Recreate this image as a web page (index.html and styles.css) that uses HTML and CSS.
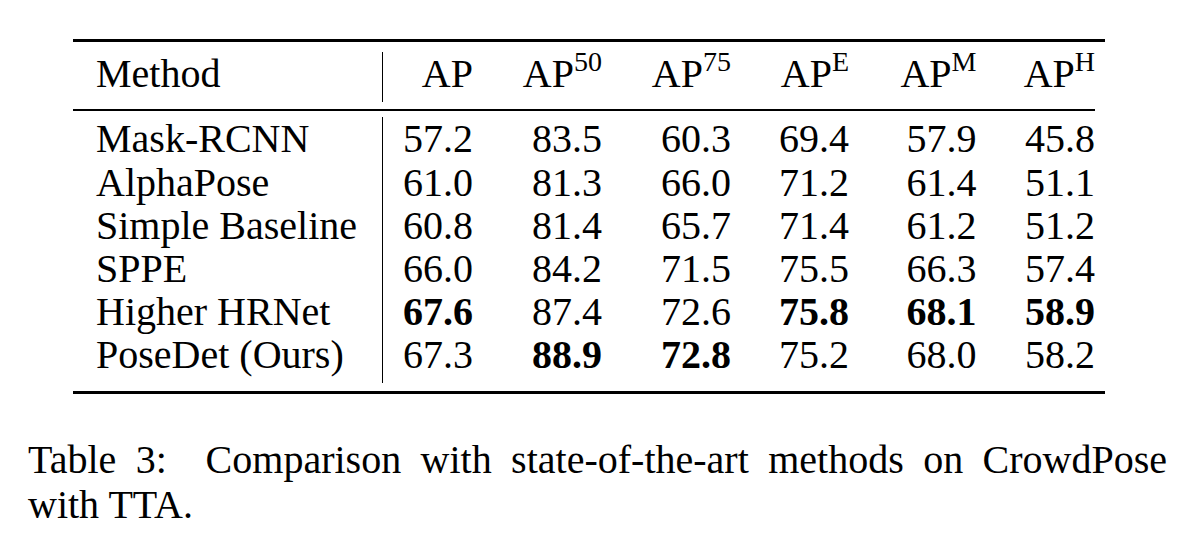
FILE: index.html
```html
<!DOCTYPE html>
<html lang="en">
<head>
<meta charset="utf-8">
<title>Table 3</title>
<link rel="stylesheet" href="styles.css">
</head>
<body>
<main class="page">
  <div class="results">
    <div class="section head">
      <div class="row last">
        <div class="cell method">Method</div>
        <div class="cell num">AP</div>
        <div class="cell num">AP<sup>50</sup></div>
        <div class="cell num">AP<sup>75</sup></div>
        <div class="cell num">AP<sup>E</sup></div>
        <div class="cell num">AP<sup>M</sup></div>
        <div class="cell num">AP<sup>H</sup></div>
      </div>
    </div>
    <div class="section body">
      <div class="row">
        <div class="cell method">Mask-RCNN</div>
        <div class="cell num">57.2</div>
        <div class="cell num">83.5</div>
        <div class="cell num">60.3</div>
        <div class="cell num">69.4</div>
        <div class="cell num">57.9</div>
        <div class="cell num">45.8</div>
      </div>
      <div class="row">
        <div class="cell method">AlphaPose</div>
        <div class="cell num">61.0</div>
        <div class="cell num">81.3</div>
        <div class="cell num">66.0</div>
        <div class="cell num">71.2</div>
        <div class="cell num">61.4</div>
        <div class="cell num">51.1</div>
      </div>
      <div class="row">
        <div class="cell method">Simple Baseline</div>
        <div class="cell num">60.8</div>
        <div class="cell num">81.4</div>
        <div class="cell num">65.7</div>
        <div class="cell num">71.4</div>
        <div class="cell num">61.2</div>
        <div class="cell num">51.2</div>
      </div>
      <div class="row">
        <div class="cell method">SPPE</div>
        <div class="cell num">66.0</div>
        <div class="cell num">84.2</div>
        <div class="cell num">71.5</div>
        <div class="cell num">75.5</div>
        <div class="cell num">66.3</div>
        <div class="cell num">57.4</div>
      </div>
      <div class="row">
        <div class="cell method">Higher HRNet</div>
        <div class="cell num best">67.6</div>
        <div class="cell num">87.4</div>
        <div class="cell num">72.6</div>
        <div class="cell num best">75.8</div>
        <div class="cell num best">68.1</div>
        <div class="cell num best">58.9</div>
      </div>
      <div class="row last">
        <div class="cell method">PoseDet (Ours)</div>
        <div class="cell num">67.3</div>
        <div class="cell num best">88.9</div>
        <div class="cell num best">72.8</div>
        <div class="cell num">75.2</div>
        <div class="cell num">68.0</div>
        <div class="cell num">58.2</div>
      </div>
    </div>
  </div>
  <p class="caption"><span class="caption-line">Table 3:&nbsp; Comparison with state-of-the-art methods on CrowdPose</span><span class="caption-rest">with TTA.</span></p>
</main>
</body>
</html>
```
FILE: styles.css
```css
html, body {
  margin: 0;
  padding: 0;
  background: #ffffff;
}

.page {
  font-family: "Liberation Serif", "Times New Roman", serif;
  font-size: 40px;
  color: #000000;
  width: 1202px;
  height: 544px;
  overflow: hidden;
}

.results {
  margin: 39px 0 0 73px;
  width: 1032px;
  box-sizing: border-box;
  padding-right: 10px;
  border-top: 3px solid #000000;
  border-bottom: 3px solid #000000;
}

.section.head {
  padding: 10px 0 7px;
  border-bottom: 2px solid #000000;
}

.section.body {
  padding: 6.4px 0 8px;
}

.row {
  display: grid;
  grid-template-columns: 310px 90px 129px 129px 118px 127.5px 118.5px;
}

.cell {
  white-space: nowrap;
  line-height: 43.16px;
}

.head .row.last .cell {
  padding-bottom: 6.8px;
}

.body .row.last .cell {
  padding-bottom: 6.6px;
}

.method {
  box-sizing: border-box;
  padding-left: 23px;
  border-right: 1px solid #000000;
}

.num {
  text-align: right;
}

.best {
  font-weight: 700;
}

sup {
  font-size: 28px;
  line-height: 0;
  vertical-align: 16px;
}

.caption {
  margin: 43.3px 0 0 28px;
  width: 1139px;
  line-height: 45px;
}

.caption-line {
  display: block;
  text-align: justify;
  text-align-last: justify;
}

.caption-rest {
  display: block;
}
```
